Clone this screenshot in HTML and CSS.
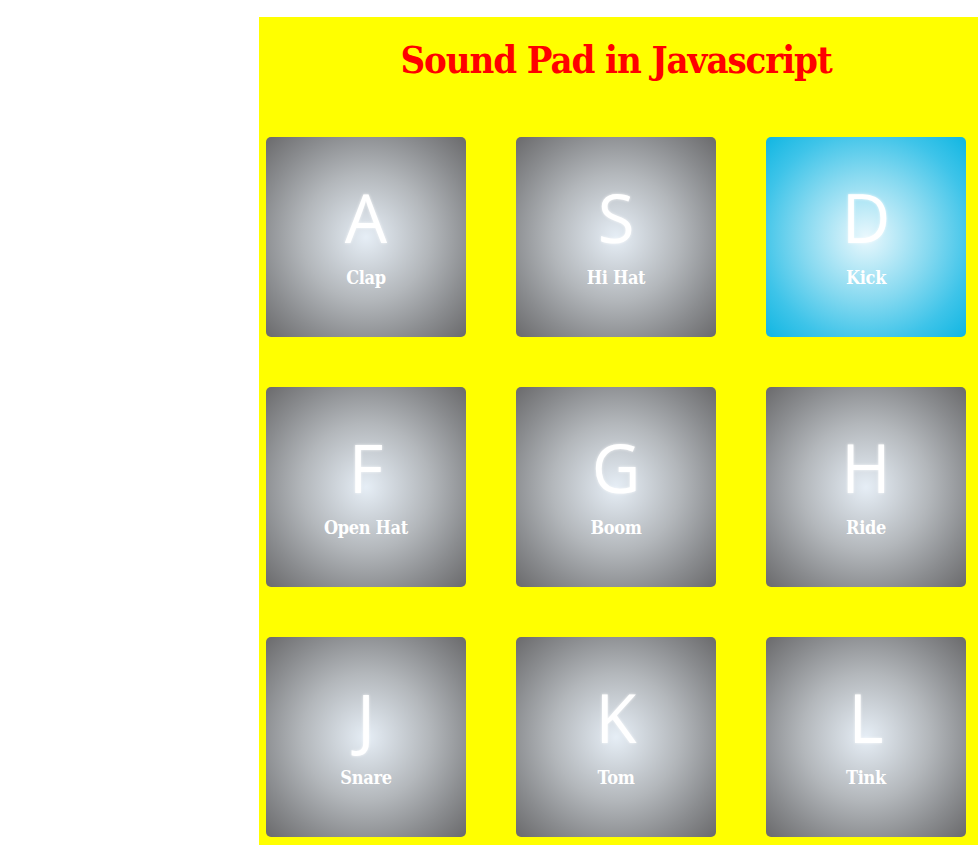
FILE: index.html
```html
<!DOCTYPE html>
<html>
<head>
<meta charset="utf-8">
<title>Sound Pad in Javascript</title>
<link rel="stylesheet" href="styles.css">
</head>
<body>
<div class="page">
  <main class="board">
    <h1 class="title">Sound Pad in Javascript</h1>
    <div class="pads">
      <div class="pad"><span class="key">A</span><span class="name">Clap</span></div>
      <div class="pad"><span class="key">S</span><span class="name">Hi Hat</span></div>
      <div class="pad pad-active"><span class="key">D</span><span class="name">Kick</span></div>
      <div class="pad"><span class="key">F</span><span class="name">Open Hat</span></div>
      <div class="pad"><span class="key">G</span><span class="name">Boom</span></div>
      <div class="pad"><span class="key">H</span><span class="name">Ride</span></div>
      <div class="pad"><span class="key">J</span><span class="name">Snare</span></div>
      <div class="pad"><span class="key">K</span><span class="name">Tom</span></div>
      <div class="pad"><span class="key">L</span><span class="name">Tink</span></div>
    </div>
  </main>
</div>
</body>
</html>
```

FILE: styles.css
```css
html, body {
  margin: 0;
  padding: 0;
  background: #ffffff;
  height: 100%;
  overflow: hidden;
}

.page {
  display: flex;
  padding: 17px 0 0 259px;
  min-height: 100vh;
  box-sizing: border-box;
}

.board {
  flex: 1;
  background: #ffff00;
  padding: 0 7px;
  display: flex;
  flex-direction: column;
  align-items: flex-start;
}

.title {
  width: 700px;
  margin: 0;
  padding-top: 19px;
  height: 48px;
  line-height: 48px;
  text-align: center;
  color: #ff0000;
  font-family: "DejaVu Serif Condensed", "DejaVu Serif", serif;
  font-stretch: condensed;
  font-weight: bold;
  font-size: 38px;
  letter-spacing: -1.1px;
}

.pads {
  margin-top: 53px;
  display: grid;
  grid-template-columns: repeat(3, 200px);
  grid-auto-rows: 200px;
  gap: 50px;
}

.pad {
  box-sizing: border-box;
  border-radius: 5px;
  background: radial-gradient(circle at center, #e6eef6 0%, #b3b7bb 45%, #8a8c8f 75%, #6a6a6c 100%);
  display: flex;
  flex-direction: column;
  align-items: center;
  padding-top: 47px;
  color: #ffffff;
}

.pad-active {
  background: radial-gradient(circle at center, #eaf8fd 0%, #86d9f0 45%, #3ec4e9 75%, #10b6e2 100%);
}

.key {
  display: block;
  font-family: "Open Sans", "DejaVu Sans", sans-serif;
  font-size: 67px;
  line-height: 67px;
  color: #ffffff;
  text-shadow: 0 0 3px rgba(255, 255, 255, 0.8);
}

.name {
  display: block;
  margin-top: 17px;
  font-family: "DejaVu Serif Condensed", "DejaVu Serif", serif;
  font-stretch: condensed;
  font-weight: bold;
  font-size: 18px;
  line-height: 19px;
  letter-spacing: -0.3px;
  color: #ffffff;
}
```
